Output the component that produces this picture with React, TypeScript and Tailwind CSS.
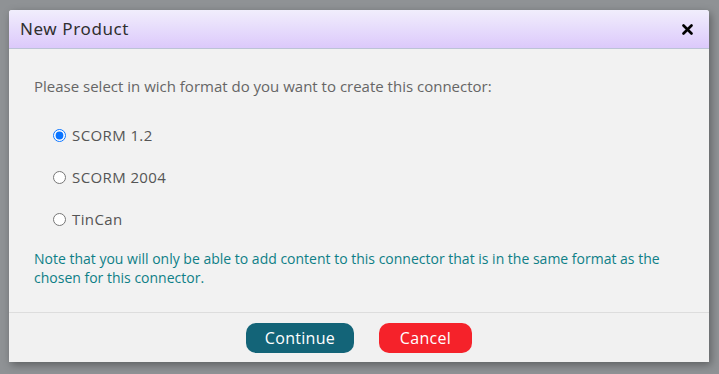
import { useState } from "react";

const formats = ["SCORM 1.2", "SCORM 2004", "TinCan"];

export default function App() {
  const [format, setFormat] = useState("SCORM 1.2");

  return (
    <div className="w-full h-[374px] bg-[#8f9295] pt-[10px] pl-[9px] overflow-hidden" style={{ fontFamily: '"Open Sans", sans-serif' }}>
      <div className="w-[700px] h-[352px] bg-[#f2f2f2] flex flex-col shadow-[2px_3px_8px_rgba(0,0,0,0.35)] rounded-tl-[3px] rounded-tr-[3px]">
        <div className="h-[39px] flex items-center justify-between pl-[11px] pr-[16px] bg-gradient-to-b from-[#f1eefc] to-[#dcc9fb] border-b border-[#bcc3d6] rounded-tl-[3px] rounded-tr-[3px]">
          <span className="text-[17px] text-[#2f2f2f] tracking-[0.6px]" style={{ fontFamily: '"Noto Sans", sans-serif' }}>New Product</span>
          <button className="w-[12px] h-[12px] flex items-center justify-center">
            <svg width="11" height="11" viewBox="0 0 11 11">
              <path d="M1.5 1.5 L9.5 9.5 M9.5 1.5 L1.5 9.5" stroke="#000" strokeWidth="2.6" strokeLinecap="round" />
            </svg>
          </button>
        </div>

        <div className="flex-1 pl-[25px] pr-[20px] pt-[27px]">
          <p className="text-[15px] text-[#666666] leading-[20px]">Please select in wich format do you want to create this connector:</p>
          <div className="flex flex-col gap-[22px] mt-[29px] pl-[19px]">
            {formats.map((f) => (
              <label key={f} className="flex items-center gap-[6px] text-[15px] text-[#555555] leading-[20px] tracking-[0.4px] cursor-pointer">
                <input
                  type="radio"
                  name="format"
                  checked={format === f}
                  onChange={() => setFormat(f)}
                  className="w-[13px] h-[13px] m-0 accent-[#0b74ff]"
                />
                {f}
              </label>
            ))}
          </div>
          <p className="mt-[20px] text-[14px] text-[#0e7f87] leading-[19px]">
            Note that you will only be able to add content to this connector that is in the same format as the chosen for this connector.
          </p>
        </div>

        <div className="h-[50px] border-t border-[#dddddd] flex items-center justify-center gap-[25px] bg-[#f1f1f1]">
          <button className="w-[108px] h-[30px] rounded-[10px] bg-[#136478] text-white text-[16px] tracking-[0.3px]">Continue</button>
          <button className="w-[93px] h-[30px] rounded-[10px] bg-[#f5222a] text-white text-[16px] tracking-[0.3px]">Cancel</button>
        </div>
      </div>
    </div>
  );
}
